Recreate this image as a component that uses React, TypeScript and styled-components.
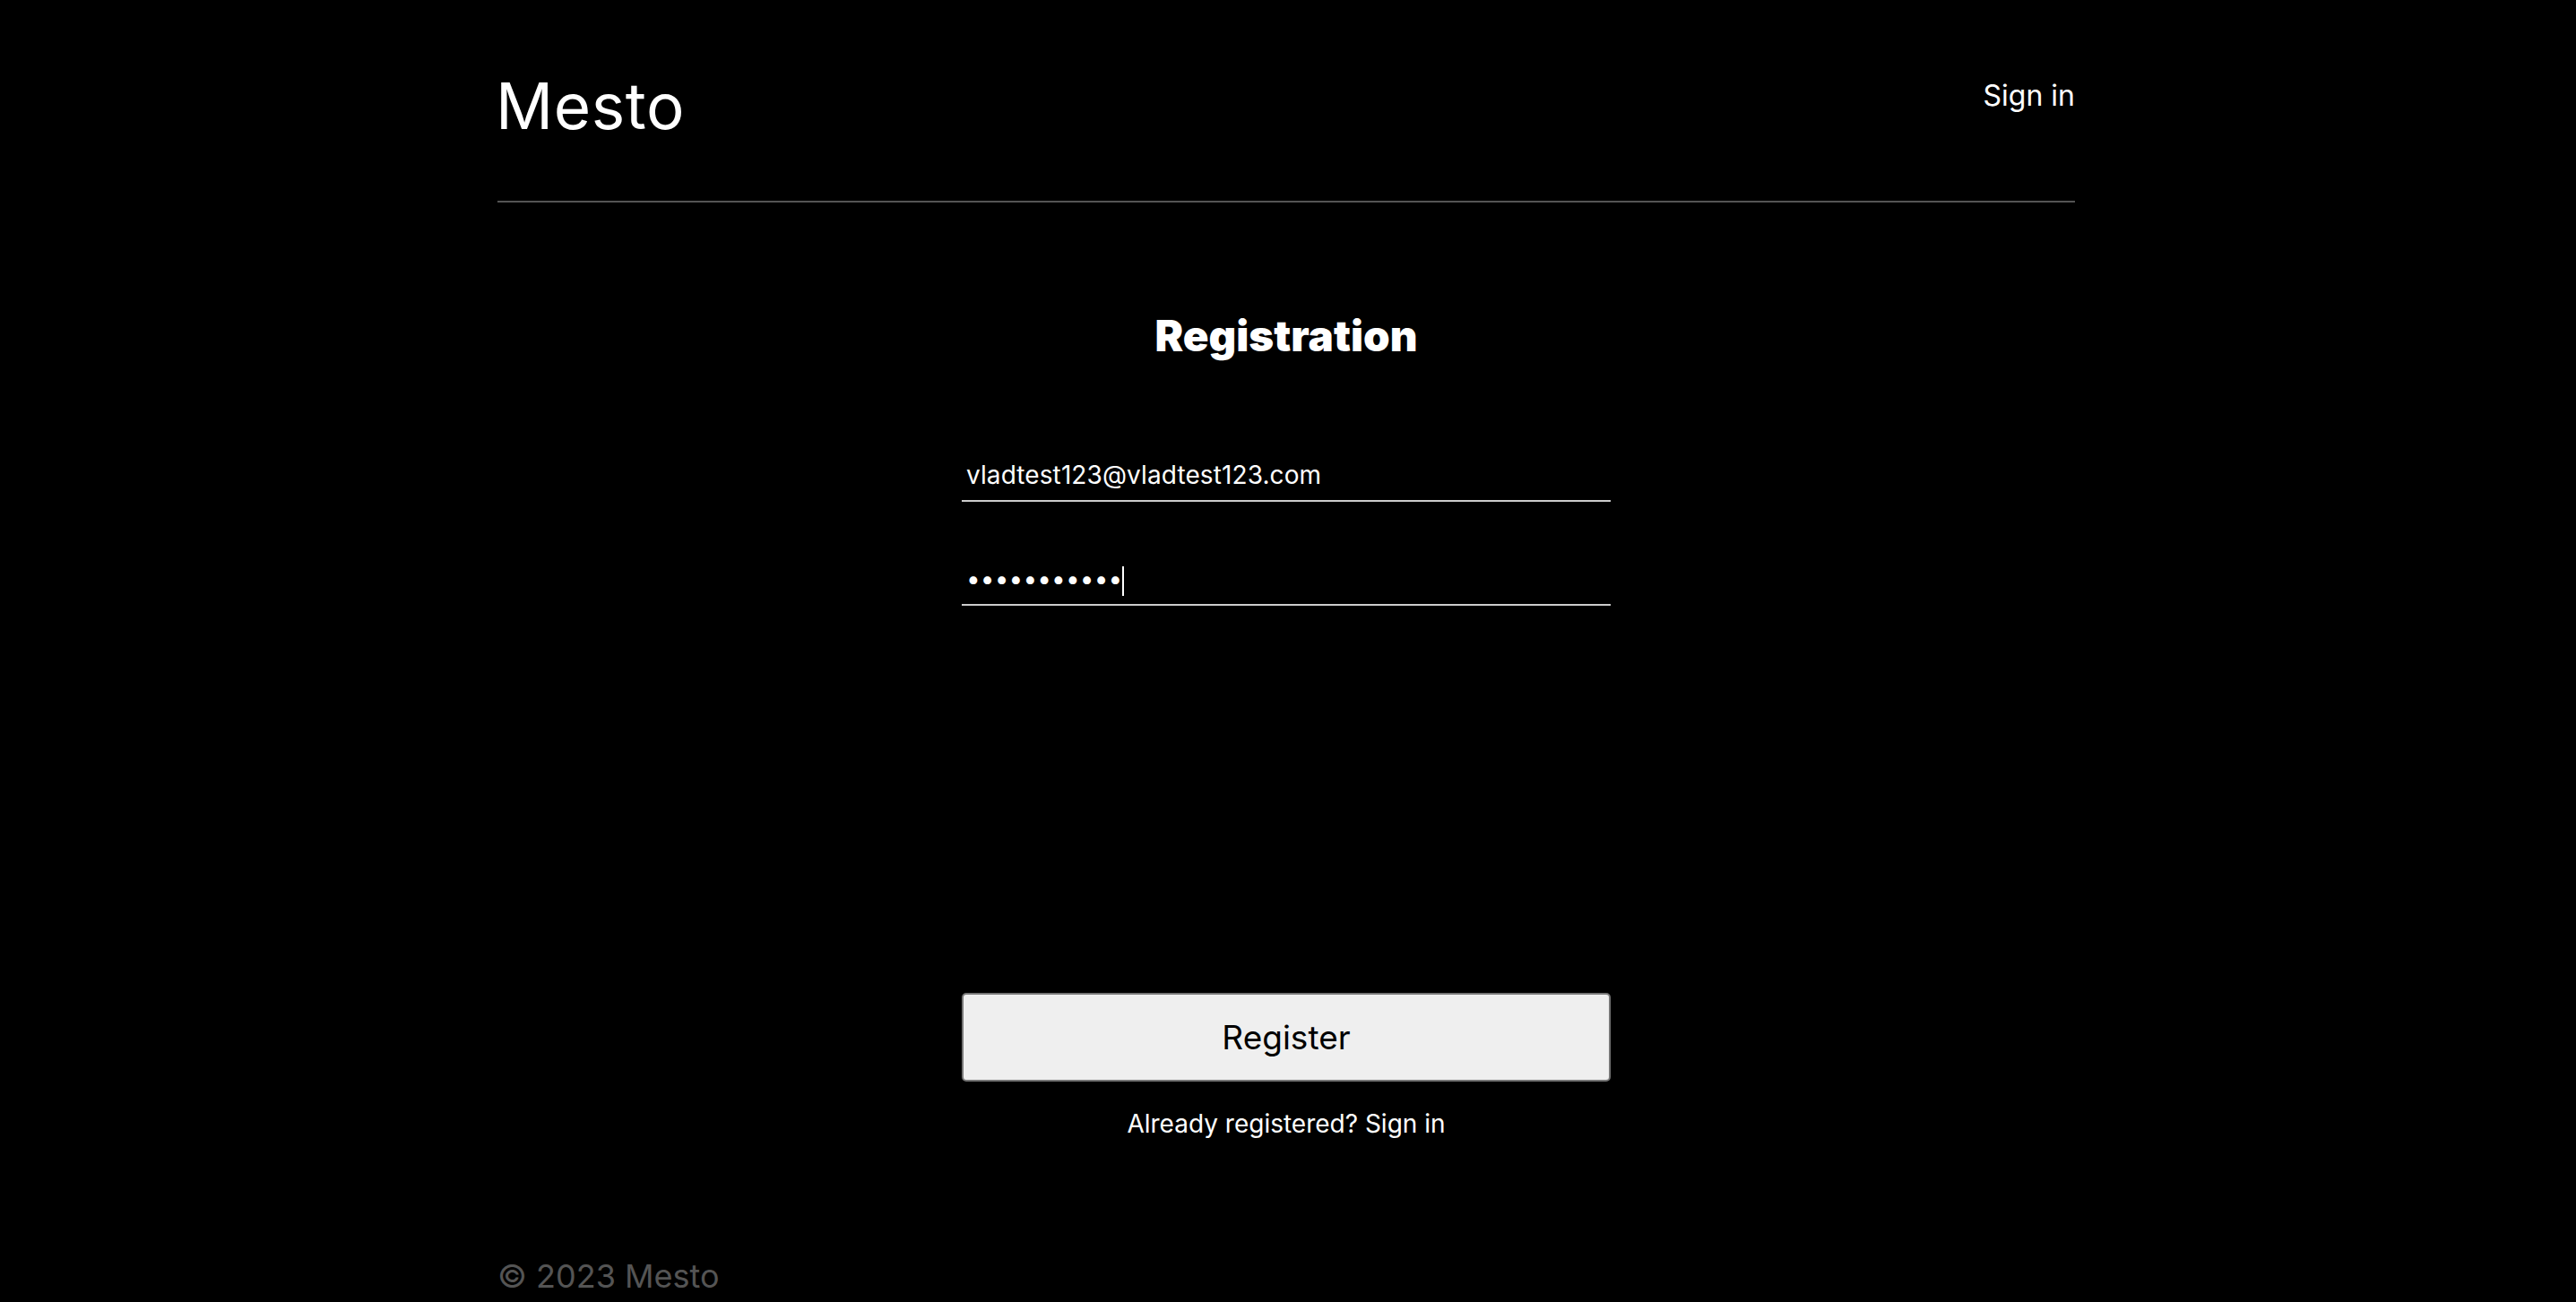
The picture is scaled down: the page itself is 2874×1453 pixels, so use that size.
import React from "react";
import styled, { createGlobalStyle } from "styled-components";

const GlobalStyle = createGlobalStyle`
  html, body {
    margin: 0;
    padding: 0;
    background: #000;
  }
  body {
    font-family: Inter, "Liberation Sans", Arial, sans-serif;
    color: #fff;
    -webkit-font-smoothing: antialiased;
  }
  * { box-sizing: border-box; }
`;

const Page = styled.div`
  min-height: 1453px;
  padding-right: 4px;
  display: flex;
  justify-content: center;
  background: #000;
`;

const Container = styled.div`
  width: 1760px;
  display: flex;
  flex-direction: column;
`;

const Header = styled.header`
  display: flex;
  justify-content: space-between;
  align-items: flex-start;
  padding-top: 75px;
  padding-bottom: 63px;
  border-bottom: 2px solid #545454;
`;

const Logo = styled.div`
  margin-left: -2px;
  font-size: 71px;
  font-weight: 400;
  line-height: normal;
  color: #fff;
  letter-spacing: 0.6px;
`;

const NavLink = styled.a`
  margin-top: 12px;
  font-size: 32px;
  line-height: normal;
  color: #fff;
  text-decoration: none;
`;

const Main = styled.main`
  display: flex;
  flex-direction: column;
  align-items: center;
  padding-top: 120px;
`;

const Title = styled.h1`
  margin: 0;
  font-size: 47.5px;
  font-weight: 900;
  line-height: normal;
  color: #fff;
`;

const Form = styled.form`
  width: 724px;
  margin-top: 110px;
  display: flex;
  flex-direction: column;
`;

const Field = styled.div<{ $gap?: number }>`
  position: relative;
  margin-top: ${(p) => p.$gap ?? 0}px;
`;

const Input = styled.input`
  width: 100%;
  display: block;
  margin: 0;
  padding: 0 0 11px 5px;
  border: none;
  border-bottom: 2px solid #cccccc;
  background: transparent;
  color: #fff;
  font-family: Inter, "Liberation Sans", Arial, sans-serif;
  font-size: 28px;
  letter-spacing: 0.1px;
  line-height: normal;
  outline: none;
  caret-color: transparent;
`;

const CaretLayer = styled.div`
  position: absolute;
  left: 5px;
  top: 2px;
  display: flex;
  align-items: center;
  height: 34px;
  pointer-events: none;
  font-family: Inter, "Liberation Sans", Arial, sans-serif;
  font-size: 28px;
  letter-spacing: 0.1px;
`;

const Mirror = styled.span`
  visibility: hidden;
  white-space: pre;
`;

const Caret = styled.span`
  display: inline-block;
  width: 2px;
  height: 33px;
  background: #fff;
`;

const Button = styled.button`
  margin-top: 432px;
  width: 724px;
  height: 99px;
  border: 2px solid #767676;
  border-radius: 5px;
  background: #efefef;
  color: #000;
  font-family: Inter, "Liberation Sans", Arial, sans-serif;
  font-size: 37px;
  cursor: pointer;
`;

const Hint = styled.p`
  margin: 30px 0 0;
  font-size: 28px;
  line-height: normal;
  color: #fff;
  text-align: center;
`;

const HintLink = styled.a`
  color: #fff;
  text-decoration: none;
`;

const Footer = styled.footer`
  margin-top: 131px;
  font-size: 36px;
  line-height: normal;
  color: #545454;
`;

const PASSWORD = "password123";

export default function App() {
  return (
    <>
      <GlobalStyle />
      <Page>
        <Container>
          <Header>
            <Logo>Mesto</Logo>
            <NavLink href="#">Sign in</NavLink>
          </Header>
          <Main>
            <Title>Registration</Title>
            <Form onSubmit={(e) => e.preventDefault()}>
              <Field>
                <Input type="email" defaultValue="vladtest123@vladtest123.com" />
              </Field>
              <Field $gap={69}>
                <Input type="password" defaultValue={PASSWORD} />
                <CaretLayer>
                  <Mirror>{"\u2022".repeat(PASSWORD.length)}</Mirror>
                  <Caret />
                </CaretLayer>
              </Field>
              <Button type="submit">Register</Button>
            </Form>
            <Hint>
              Already registered? <HintLink href="#">Sign in</HintLink>
            </Hint>
          </Main>
          <Footer>© 2023 Mesto</Footer>
        </Container>
      </Page>
    </>
  );
}
